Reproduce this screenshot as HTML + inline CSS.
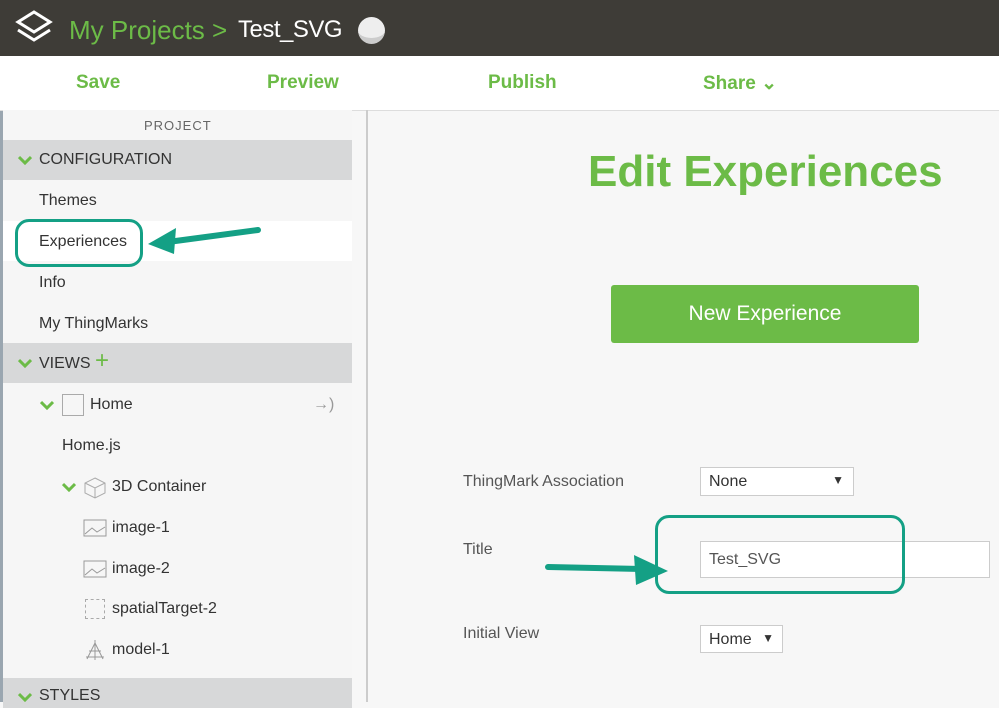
<!DOCTYPE html>
<html><head><meta charset="utf-8"><style>
*{box-sizing:border-box;margin:0;padding:0}
body{width:999px;height:702px;overflow:hidden;position:relative;background:#f7f7f7;font-family:"Liberation Sans",sans-serif;color:#333}
.a{position:absolute}
.hdr{left:0;top:0;width:999px;height:56px;background:#3e3c37}
.tb{left:0;top:56px;width:999px;height:54px;background:#fff}
.tb span{position:absolute;top:16px;color:#6cbb47;font-size:19px;font-weight:bold}
.side{left:3px;top:110px;width:349px;height:592px;background:#f6f6f6}
.sec{position:absolute;left:3px;width:349px;height:40px;background:#d7d8d9;font-size:16px;color:#333;padding:11px 0 0 36px}
.it{position:absolute;font-size:16px;color:#333}
.chev{position:absolute;width:14px;height:10px}
.lbl{position:absolute;font-size:16px;color:#555}
.sel{position:absolute;background:#fff;border:1px solid #ccc;font-size:16px;color:#333;padding:5px 8px}
</style></head><body>
<div class="a" style="left:0;top:0;width:3px;height:702px;background:#9aa6b0"></div>
<div class="a hdr"></div>
<svg class="a" style="left:14px;top:10px" width="40" height="36" viewBox="0 0 40 36"><path d="M20 2 L36 12 L20 22 L4 12 Z" fill="none" stroke="#fff" stroke-width="3"/><path d="M4 20 L20 30 L36 20" fill="none" stroke="#fff" stroke-width="3"/></svg>
<div class="a" style="left:69px;top:15px;font-size:26px;color:#6cbb47">My Projects &gt;</div>
<div class="a" style="left:238px;top:16px;font-size:24px;color:#fff;letter-spacing:-0.5px">Test_SVG</div>
<div class="a" style="left:358px;top:17px;width:27px;height:27px;border-radius:50%;background:#eee;border-bottom:6px solid #ccc"></div>
<div class="a tb"><span style="left:76px">Save</span><span style="left:267px">Preview</span><span style="left:488px">Publish</span><span style="left:703px">Share ⌄</span></div>
<div class="a" style="left:0;top:110px;width:999px;height:1px;background:#ddd"></div>
<div class="a side"></div>
<div class="a" style="left:366px;top:110px;width:2px;height:592px;background:#ccc"></div>
<div class="a" style="left:144px;top:118px;font-size:13px;color:#666;letter-spacing:1px">PROJECT</div>
<div class="sec" style="top:140px">CONFIGURATION</div>
<svg class="chev" style="left:18px;top:155px" viewBox="0 0 14 10"><path d="M1 2 L7 8 L13 2" fill="none" stroke="#6cbb47" stroke-width="3"/></svg>
<div class="it" style="left:39px;top:192px">Themes</div>
<div class="a" style="left:3px;top:221px;width:349px;height:40px;background:#fff"></div>
<div class="it" style="left:39px;top:233px">Experiences</div>
<div class="it" style="left:39px;top:274px">Info</div>
<div class="it" style="left:39px;top:315px">My ThingMarks</div>
<div class="sec" style="top:343px">VIEWS <span style="color:#6cbb47;font-size:24px;line-height:14px">+</span></div>
<svg class="chev" style="left:18px;top:358px" viewBox="0 0 14 10"><path d="M1 2 L7 8 L13 2" fill="none" stroke="#6cbb47" stroke-width="3"/></svg>
<svg class="chev" style="left:40px;top:400px" viewBox="0 0 14 10"><path d="M1 2 L7 8 L13 2" fill="none" stroke="#6cbb47" stroke-width="3"/></svg>
<div class="a" style="left:62px;top:394px;width:22px;height:22px;border:1px solid #aaa"></div>
<div class="it" style="left:90px;top:396px">Home</div>
<div class="it" style="left:313px;top:396px;color:#999">→)</div>
<div class="it" style="left:62px;top:437px">Home.js</div>
<svg class="chev" style="left:62px;top:482px" viewBox="0 0 14 10"><path d="M1 2 L7 8 L13 2" fill="none" stroke="#6cbb47" stroke-width="3"/></svg>
<svg class="a" style="left:83px;top:476px" width="24" height="24"><path d="M12 2 L22 7 L22 17 L12 22 L2 17 L2 7 Z M2 7 L12 12 L22 7 M12 12 L12 22" fill="none" stroke="#aaa"/></svg>
<div class="it" style="left:112px;top:478px">3D Container</div>
<svg class="a" style="left:83px;top:518px" width="24" height="20"><rect x="1" y="2" width="22" height="16" fill="none" stroke="#999"/><path d="M2 16 L9 10 L14 14 L22 9" fill="none" stroke="#999"/></svg>
<div class="it" style="left:112px;top:519px">image-1</div>
<svg class="a" style="left:83px;top:559px" width="24" height="20"><rect x="1" y="2" width="22" height="16" fill="none" stroke="#999"/><path d="M2 16 L9 10 L14 14 L22 9" fill="none" stroke="#999"/></svg>
<div class="it" style="left:112px;top:560px">image-2</div>
<div class="a" style="left:85px;top:599px;width:20px;height:20px;border:1px dashed #aaa"></div>
<div class="it" style="left:112px;top:600px">spatialTarget-2</div>
<svg class="a" style="left:83px;top:639px" width="24" height="22"><path d="M12 1 L12 21 M3 18 L21 18 M6 12 L18 12 M12 4 L4 20 M12 4 L20 20" fill="none" stroke="#999"/></svg>
<div class="it" style="left:112px;top:641px">model-1</div>
<div class="sec" style="top:678px;height:30px;padding-top:9px">STYLES</div>
<svg class="chev" style="left:18px;top:692px" viewBox="0 0 14 10"><path d="M1 2 L7 8 L13 2" fill="none" stroke="#6cbb47" stroke-width="3"/></svg>
<div class="a" style="left:15px;top:219px;width:128px;height:48px;border:3px solid #14a085;border-radius:14px"></div>
<svg class="a" style="left:140px;top:220px" width="125" height="36"><path d="M118 10 L28 22" stroke="#14a085" stroke-width="6" stroke-linecap="round"/><path d="M8 24 L36 8 L34 34 Z" fill="#14a085"/></svg>
<div class="a" style="left:588px;top:147px;font-size:44px;font-weight:bold;color:#6cbb47">Edit Experiences</div>
<div class="a" style="left:611px;top:285px;width:308px;height:58px;background:#6cbb47;border-radius:3px;color:#fff;font-size:21px;text-align:center;line-height:58px">New Experience</div>
<div class="lbl" style="left:463px;top:473px">ThingMark Association</div>
<div class="sel" style="left:700px;top:467px;width:154px;height:29px">None<span style="position:absolute;right:9px;top:5px;font-size:12px">▼</span></div>
<div class="lbl" style="left:463px;top:541px">Title</div>
<div class="sel" style="left:700px;top:541px;width:290px;height:37px;padding-top:9px;color:#555">Test_SVG</div>
<div class="lbl" style="left:463px;top:625px">Initial View</div>
<div class="sel" style="left:700px;top:625px;width:83px;height:28px">Home<span style="position:absolute;right:8px;top:5px;font-size:12px">▼</span></div>
<div class="a" style="left:655px;top:515px;width:250px;height:79px;border:3px solid #14a085;border-radius:14px"></div>
<svg class="a" style="left:542px;top:553px" width="130" height="32"><path d="M6 14 L100 16" stroke="#14a085" stroke-width="6" stroke-linecap="round"/><path d="M92 2 L126 18 L94 32 Z" fill="#14a085"/></svg>
</body></html>
